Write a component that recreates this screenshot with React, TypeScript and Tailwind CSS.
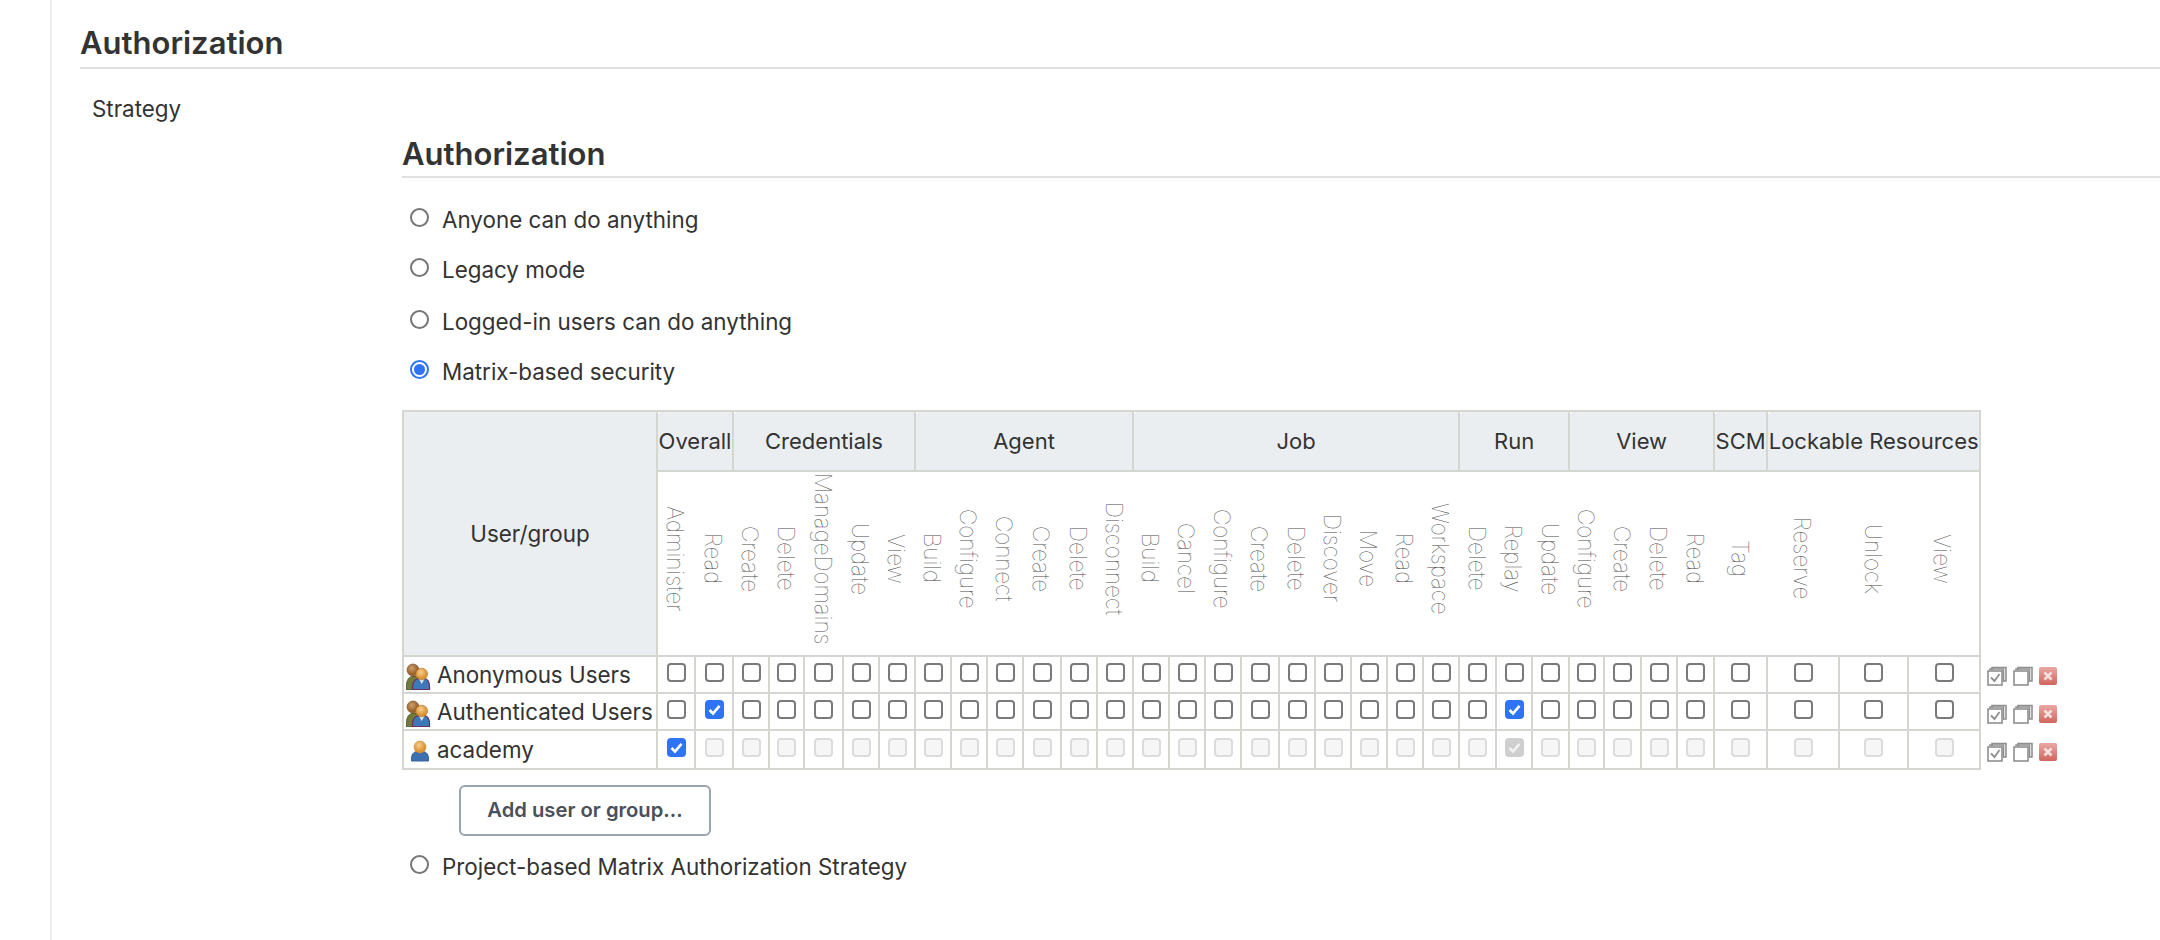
import { useId } from 'react';

const groups = [
    { name: 'Overall', perms: ['Administer', 'Read'] },
    { name: 'Credentials', perms: ['Create', 'Delete', 'ManageDomains', 'Update', 'View'] },
    { name: 'Agent', perms: ['Build', 'Configure', 'Connect', 'Create', 'Delete', 'Disconnect'] },
    { name: 'Job', perms: ['Build', 'Cancel', 'Configure', 'Create', 'Delete', 'Discover', 'Move', 'Read', 'Workspace'] },
    { name: 'Run', perms: ['Delete', 'Replay', 'Update'] },
    { name: 'View', perms: ['Configure', 'Create', 'Delete', 'Read'] },
    { name: 'SCM', perms: ['Tag'] },
    { name: 'Lockable Resources', perms: ['Reserve', 'Unlock', 'View'] },
];

const perms = groups.flatMap((g) => g.perms);

const colWidths = [38, 38, 36, 35, 39, 36, 36, 36, 36, 36, 38, 36, 36, 36, 36, 36, 38, 36, 36, 36, 36, 36, 37, 36, 37, 35, 37, 36, 37, 53, 72, 69, 70];

const users = [
    { name: 'Anonymous Users', group: true, checked: [] as number[], locked: false },
    { name: 'Authenticated Users', group: true, checked: [1, 23], locked: false },
    { name: 'academy', group: false, checked: [0], locked: true },
];

function UserIcon({ group }: { group: boolean }) {
    const id = useId().replace(/:/g, '');
    return (
        <svg width="30" height="30" viewBox="0 0 30 30" className="shrink-0">
            <defs>
                <radialGradient id={id} cx="42%" cy="35%">
                    <stop offset="0%" stopColor="#f6cf94" />
                    <stop offset="100%" stopColor="#dc9433" />
                </radialGradient>
                <radialGradient id={`${id}b`} cx="40%" cy="35%">
                    <stop offset="0%" stopColor="#cfa06a" />
                    <stop offset="100%" stopColor="#96622e" />
                </radialGradient>
            </defs>
            {group ? (
                <>
                    <path d="M0.5 30 C0 21 2 17.5 6 16.5 L10 16.5 C13 17.5 14 21 14 30 Z" fill="#6f7a3b" stroke="#56602d" />
                    <circle cx="7" cy="10" r="6" fill={`url(#${id}b)`} stroke="#80532a" strokeWidth="0.7" />
                    <path d="M6.5 29.5 C6 22.5 8 19.5 12.5 18.5 L19 18.5 C22.5 19.5 24 22.5 23.5 29.5 Z" fill="#3f78b8" stroke="#6d2f5e" strokeWidth="1.2" />
                    <path d="M13 19 L15.7 24 L18.5 19 Z" fill="#dfe9f4" />
                    <circle cx="15.7" cy="14" r="5.8" fill={`url(#${id})`} stroke="#c0762a" strokeWidth="0.7" />
                </>
            ) : (
                <>
                    <path d="M5.5 26 C5 19.5 7.5 17 11 16.5 L17 16.5 C20.5 17 23 19.5 22.5 26 Z" fill="#3d70ae" stroke="#32609a" />
                    <circle cx="14" cy="12" r="6" fill={`url(#${id})`} stroke="#cc8c33" strokeWidth="0.6" />
                </>
            )}
        </svg>
    );
}

function CheckMark({ color }: { color: string }) {
    return (
        <svg viewBox="0 0 19 19" className="absolute inset-0 w-[19px] h-[19px]">
            <path d="M4.5 10 L8 13.5 L14.5 5.8" fill="none" stroke={color} strokeWidth="2.6" />
        </svg>
    );
}

function MatrixCheck({ checked, disabled }: { checked: boolean; disabled: boolean }) {
    let look = 'bg-white border-2 border-[#7a7a7a]';
    if (disabled) look = checked ? 'bg-[#cfcfcf]' : 'bg-[#f6f6f6] border-2 border-[#dcdcdc]';
    else if (checked) look = 'bg-[#2f74f6]';
    return (
        <span className={`relative block w-[19px] h-[19px] mx-auto rounded-[4px] ${look}`}>
            {checked && <CheckMark color={disabled ? '#f2f2f2' : '#ffffff'} />}
        </span>
    );
}

function Radio({ checked = false }: { checked?: boolean }) {
    if (checked) {
        return (
            <span className="w-[19px] h-[19px] rounded-full border-2 border-[#2f74f6] flex items-center justify-center shrink-0">
                <span className="w-[11px] h-[11px] rounded-full bg-[#2f74f6]" />
            </span>
        );
    }
    return <span className="w-[19px] h-[19px] rounded-full border-2 border-[#767676] bg-white shrink-0" />;
}

function RadioRow({ label, checked, className }: { label: string; checked?: boolean; className: string }) {
    return (
        <label className={`flex items-center pl-[8px] ${className}`}>
            <Radio checked={checked} />
            <span className="ml-[13px] pt-[6px] text-[22.4px] leading-[28px] text-[#333]">{label}</span>
        </label>
    );
}

function ActionIcons() {
    return (
        <div className="flex items-center gap-[6px] h-[38px] pb-[1px]">
            <svg width="20" height="20" viewBox="0 0 20 20" fill="none" stroke="#8f8f8f" strokeWidth="1.6">
                <path d="M5 4V1.5H19V15H16" />
                <path d="M3 4V3H16.5V15.5" />
                <rect x="1" y="5" width="14" height="14" />
                <path d="M4 11.5 L7.5 15 L12.5 8" strokeWidth="1.8" />
            </svg>
            <svg width="20" height="20" viewBox="0 0 20 20" fill="none" stroke="#8f8f8f" strokeWidth="1.6">
                <path d="M5 4V1.5H19V15H16" />
                <path d="M3 4V3H16.5V15.5" />
                <rect x="1" y="5" width="14" height="14" />
            </svg>
            <svg width="18" height="18" viewBox="0 0 18 18">
                <defs>
                    <linearGradient id="del" x1="0" y1="0" x2="0" y2="1">
                        <stop offset="0%" stopColor="#eaa8a3" />
                        <stop offset="100%" stopColor="#d0655e" />
                    </linearGradient>
                </defs>
                <rect width="18" height="18" rx="2" fill="url(#del)" />
                <path d="M5.5 5.5 L12.5 12.5 M12.5 5.5 L5.5 12.5" stroke="#f4e2e0" strokeWidth="2.6" />
            </svg>
        </div>
    );
}

export default function App() {
    return (
        <div className="min-h-[940px] bg-white font-[Inter,sans-serif] text-[#333] overflow-hidden">
            <div className="ml-[50px] min-h-[940px] border-l-2 border-[#eeeeee] pl-[28px]">
                <h2 className="pt-[24px] h-[43px] text-[31px] leading-[38px] font-semibold border-b-2 border-[#e0e0e0] box-content">
                    Authorization
                </h2>
                <div className="pl-[12px] pt-[26px] text-[22.4px] leading-[28px]">Strategy</div>

                <div className="ml-[322px] mt-[12px]">
                    <h3 className="h-[41px] text-[31px] leading-[38px] font-semibold border-b-2 border-[#e0e0e0] box-content">
                        Authorization
                    </h3>

                    <RadioRow label="Anyone can do anything" className="mt-[25px] h-[28px]" />
                    <RadioRow label="Legacy mode" className="mt-[22px] h-[28px]" />
                    <RadioRow label="Logged-in users can do anything" className="mt-[24px] h-[28px]" />
                    <RadioRow label="Matrix-based security" checked className="mt-[22px] h-[28px]" />

                    <div className="flex items-start mt-[27px]">
                        <table className="table-fixed border-separate border-spacing-0 border-2 border-[#d3d7cf] w-[1579px] shrink-0">
                            <colgroup>
                                <col className="w-[254px]" />
                                {colWidths.map((w, i) => (
                                    <col key={i} style={{ width: w }} />
                                ))}
                            </colgroup>
                            <thead>
                                <tr className="h-[60px]">
                                    <th rowSpan={2} className="bg-[#eaeef1] border-r-2 border-b-2 border-[#d3d7cf] text-[22.4px] font-normal">
                                        User/group
                                    </th>
                                    {groups.map((g, i) => (
                                        <th
                                            key={g.name}
                                            colSpan={g.perms.length}
                                            className={`bg-[#eaeef1] border-b-2 border-[#d3d7cf] text-[22px] font-normal whitespace-nowrap rounded-tl-[4px] ${i < groups.length - 1 ? 'border-r-2' : ''}`}
                                        >
                                            {g.name}
                                        </th>
                                    ))}
                                </tr>
                                <tr className="h-[185px]">
                                    {perms.map((p, i) => (
                                        <th key={i} className="p-0 border-b-2 border-[#d3d7cf]">
                                            <div className="flex justify-center pr-[4px] pb-[10px]">
                                                <span className="[writing-mode:vertical-rl] text-[22.4px] leading-[24px] font-thin text-[#4a4a4a] whitespace-nowrap">
                                                    {p}
                                                </span>
                                            </div>
                                        </th>
                                    ))}
                                </tr>
                            </thead>
                            <tbody>
                                {users.map((u, r) => (
                                    <tr key={u.name} className="h-[37px]">
                                        <td className={`p-0 border-r-2 border-[#d3d7cf] ${r < 2 ? 'border-b-2' : ''}`}>
                                            <div className="flex items-center h-[33px] pl-[2px] whitespace-nowrap text-[22.4px] leading-[30px]">
                                                <UserIcon group={u.group} />
                                                <span className="ml-[1px]">{u.name}</span>
                                            </div>
                                        </td>
                                        {perms.map((_, c) => {
                                            const checked = u.checked.includes(c);
                                            // academy has Administer, so everything else is implied and greyed out
                                            const implied = u.locked && c !== 0;
                                            return (
                                                <td
                                                    key={c}
                                                    className={`p-0 pb-[4px] border-[#d3d7cf] ${r < 2 ? 'border-b-2' : ''} ${c < perms.length - 1 ? 'border-r-2' : ''}`}
                                                >
                                                    <MatrixCheck checked={checked || (implied && c === 23)} disabled={implied} />
                                                </td>
                                            );
                                        })}
                                    </tr>
                                ))}
                            </tbody>
                        </table>
                        <div className="pl-[6px] pt-[247px]">
                            <ActionIcons />
                            <ActionIcons />
                            <ActionIcons />
                        </div>
                    </div>

                    <button className="block ml-[57px] mt-[14px] w-[252px] h-[51px] rounded-[6px] border-2 border-[#98a4b0] bg-white text-[20.2px] font-semibold text-[#4a5058]">
                        Add user or group...
                    </button>

                    <RadioRow label="Project-based Matrix Authorization Strategy" className="mt-[14px] h-[28px]" />
                </div>
            </div>
        </div>
    );
}
